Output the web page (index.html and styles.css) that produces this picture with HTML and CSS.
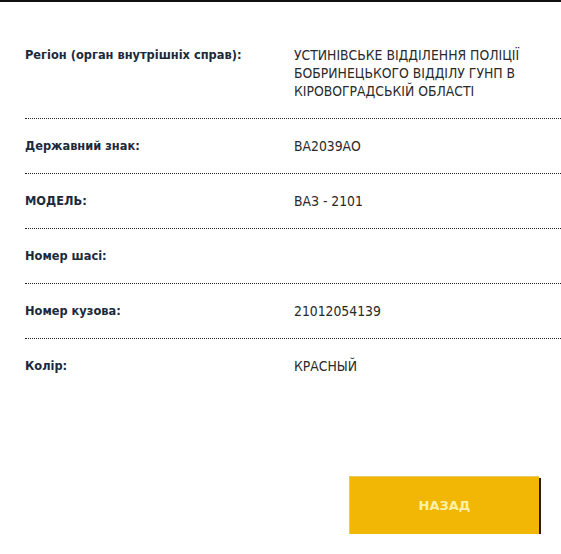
FILE: index.html
```html
<!DOCTYPE html>
<html>

<head>
  <meta charset="utf-8">
  <link rel="stylesheet" href="styles.css">
</head>

<body>

  <div class="topline"></div>

  <div class="info">
    <div class="row">
      <div class="label">Регіон (орган внутрішніх справ):</div>
      <div class="value">УСТИНІВСЬКЕ ВІДДІЛЕННЯ ПОЛІЦІЇ БОБРИНЕЦЬКОГО ВІДДІЛУ ГУНП В КІРОВОГРАДСЬКІЙ ОБЛАСТІ</div>
    </div>
    <div class="row">
      <div class="label">Державний знак:</div>
      <div class="value">ВА2039АО</div>
    </div>
    <div class="row">
      <div class="label">МОДЕЛЬ:</div>
      <div class="value">ВАЗ - 2101</div>
    </div>
    <div class="row">
      <div class="label">Номер шасі:</div>
      <div class="value"></div>
    </div>
    <div class="row">
      <div class="label">Номер кузова:</div>
      <div class="value">21012054139</div>
    </div>
    <div class="row last">
      <div class="label">Колір:</div>
      <div class="value">КРАСНЫЙ</div>
    </div>
  </div>

  <div class="actions">
    <button class="btn" type="button">
      <span>НАЗАД</span>
    </button>
  </div>

</body>

</html>
```

FILE: styles.css
```css
html {
  height: 100%;
}

body {
  margin: 0;
  background: #fff;
  font-family: "DejaVu Sans", Verdana, sans-serif;
}

.topline {
  height: 2px;
  background-color: #111;
}

.info {
  margin: 26px 0 0 25px;
}

.row {
  display: grid;
  grid-template-columns: 269px 1fr;
  padding: 18px 0;
  min-height: 18px;
  border-bottom: 1px dotted #222;
}

.row.last {
  border-bottom: none;
}

.label {
  font-family: "DejaVu Sans Condensed", "DejaVu Sans", sans-serif;
  font-size: 12.7px;
  font-weight: bold;
  line-height: 18px;
  color: #1b2a3b;
}

.value {
  font-family: "DejaVu Sans Condensed", "DejaVu Sans", sans-serif;
  font-size: 13.8px;
  line-height: 18px;
  color: #2a2a2a;
  padding-right: 30px;
}

.actions {
  display: flex;
  justify-content: flex-end;
  padding: 83px 22px 0 0;
}

.btn {
  width: 190px;
  height: 58px;
  padding: 0;
  border: none;
  border-top: 1px solid #e8c860;
  border-left: 1px solid #e8c860;
  outline: none;
  background-color: #f2b705;
  box-shadow: 2px 2px 0 #2a1a00;
  color: #fdf1a6;
  font-family: "DejaVu Sans", Verdana, sans-serif;
  font-size: 13px;
  font-weight: bold;
}
```
